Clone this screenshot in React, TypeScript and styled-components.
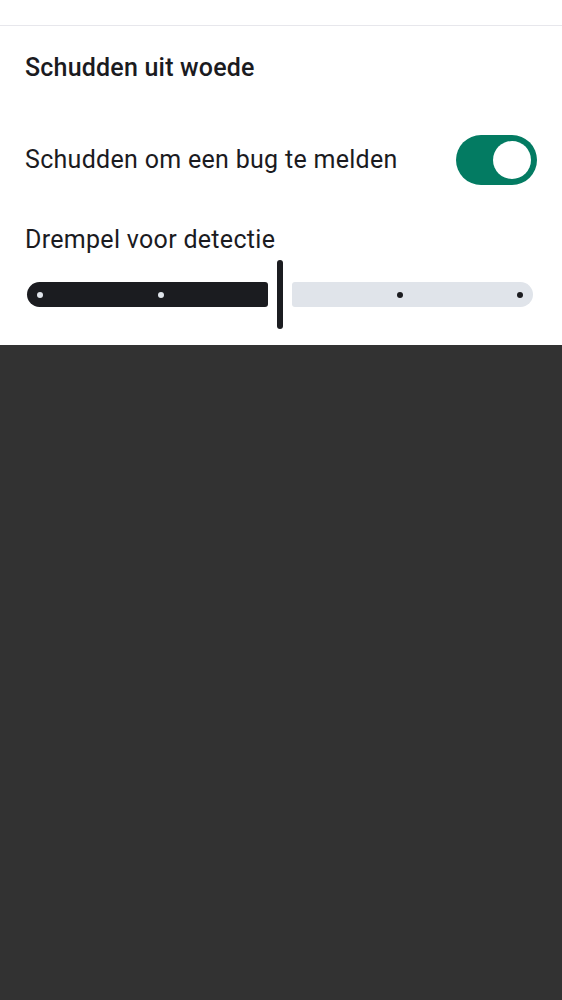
import React from "react";
import styled, { createGlobalStyle } from "styled-components";

const Global = createGlobalStyle`
  html, body { margin: 0; padding: 0; background: #323232; }
  body { font-family: Roboto, "Noto Sans", sans-serif; -webkit-font-smoothing: antialiased; }
`;

const Page = styled.div`
  width: 562px;
  min-height: 1000px;
  background: #323232;
`;

const Panel = styled.div`
  background: #ffffff;
  display: flex;
  flex-direction: column;
`;

const TopBar = styled.div`
  height: 25px;
  border-bottom: 1px solid #e7e7ec;
`;

const SectionTitle = styled.h2`
  margin: 0;
  padding: 27px 25px 0;
  height: 30px;
  line-height: 30px;
  font-size: 25px;
  font-weight: 500;
  letter-spacing: 0.2px;
  color: #1b1b1f;
`;

const SwitchRow = styled.div`
  display: flex;
  align-items: center;
  justify-content: space-between;
  padding: 0 25px;
  margin-top: 52px;
  height: 50px;
`;

const Label = styled.span`
  font-size: 25px;
  line-height: 34px;
  letter-spacing: 0.3px;
  color: #1b1b1f;
`;

const SliderLabel = styled(Label)`
  display: block;
  padding: 0 25px;
  margin-top: 38px;
`;

const Switch = styled.div<{ $on: boolean }>`
  width: 81px;
  height: 50px;
  border-radius: 25px;
  background: ${(p) => (p.$on ? "#037b62" : "#e0e2ec")};
  display: flex;
  align-items: center;
  justify-content: ${(p) => (p.$on ? "flex-end" : "flex-start")};
  padding: 0 6px;
  box-sizing: border-box;
`;

const Thumb = styled.div`
  width: 38px;
  height: 38px;
  border-radius: 50%;
  background: #ffffff;
`;

const Slider = styled.div`
  display: flex;
  align-items: center;
  gap: 9px;
  margin: 3px 0 16px 27px;
  width: 506px;
  height: 69px;
`;

const Track = styled.div<{ $active: boolean }>`
  position: relative;
  flex: 1;
  height: 25px;
  background: ${(p) => (p.$active ? "#1b1c20" : "#e0e4ea")};
  border-radius: ${(p) => (p.$active ? "12.5px 3px 3px 12.5px" : "3px 12.5px 12.5px 3px")};
`;

const Stop = styled.span<{ $onActive: boolean }>`
  position: absolute;
  top: 50%;
  width: 6px;
  height: 6px;
  margin: -3px 0 0 -3px;
  border-radius: 50%;
  background: ${(p) => (p.$onActive ? "#e0e4ea" : "#1b1c20")};
`;

const Handle = styled.div`
  width: 6px;
  height: 69px;
  border-radius: 3px;
  background: #1b1c20;
`;

export default function App() {
  return (
    <Page>
      <Global />
      <Panel>
        <TopBar />
        <SectionTitle>Schudden uit woede</SectionTitle>
        <SwitchRow>
          <Label>Schudden om een bug te melden</Label>
          <Switch $on>
            <Thumb />
          </Switch>
        </SwitchRow>
        <SliderLabel>Drempel voor detectie</SliderLabel>
        <Slider>
          <Track $active>
            <Stop $onActive style={{ left: 13 }} />
            <Stop $onActive style={{ left: 134 }} />
          </Track>
          <Handle />
          <Track $active={false}>
            <Stop $onActive={false} style={{ left: 108 }} />
            <Stop $onActive={false} style={{ left: 228 }} />
          </Track>
        </Slider>
      </Panel>
    </Page>
  );
}
